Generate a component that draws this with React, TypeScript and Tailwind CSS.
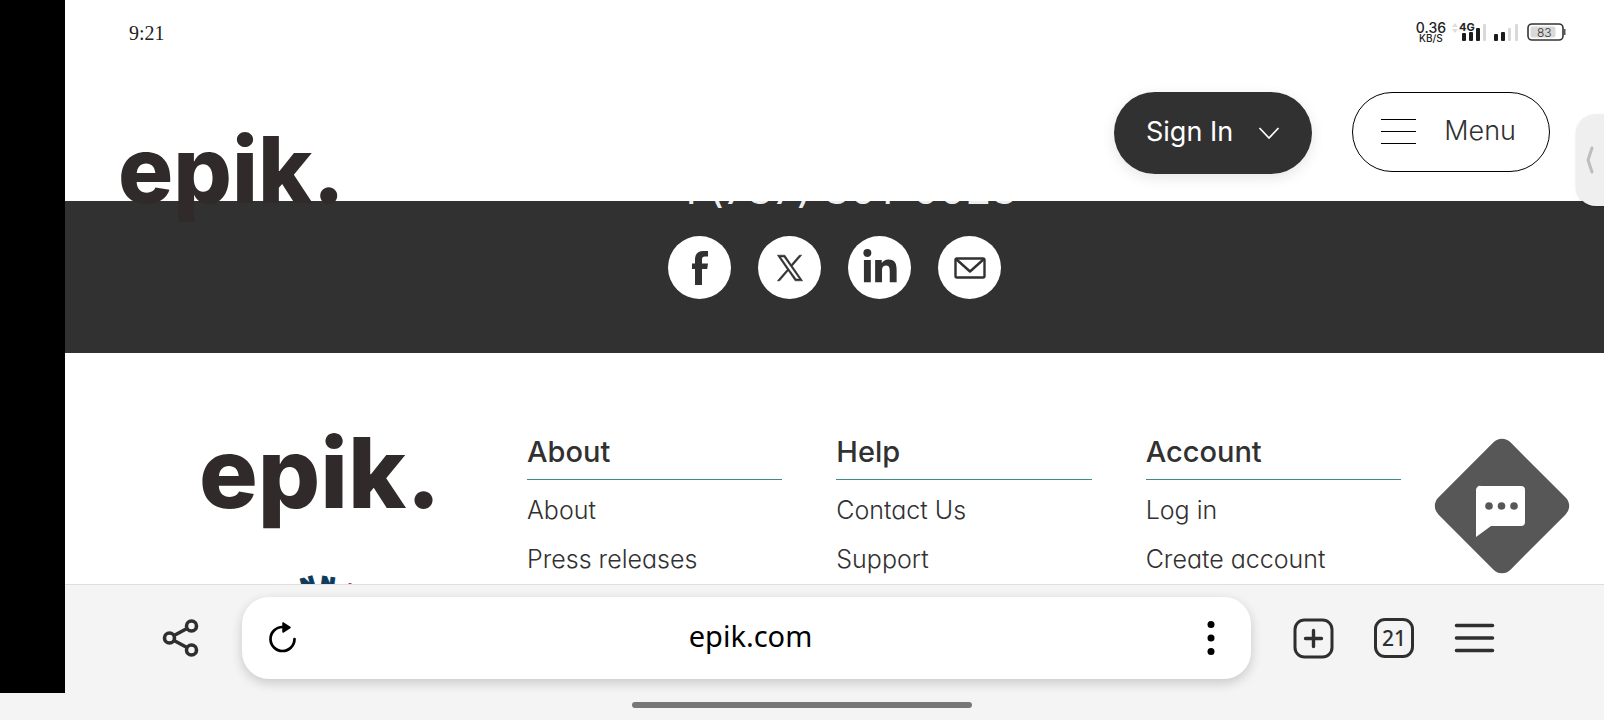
import type { ReactNode } from "react";
import { FaLinkedinIn } from "react-icons/fa";

const columns = [
  { title: "About", links: ["About", "Press releases"] },
  { title: "Help", links: ["Contact Us", "Support"] },
  { title: "Account", links: ["Log in", "Create account"] },
];

function StatusBar() {
  return (
    <div className="flex h-16 items-center justify-between pl-16 pr-[38px]">
      <time className="pt-0.5 font-['Liberation_Serif',serif] text-xl text-[#222]">9:21</time>
      <div className="flex items-center gap-1.5 font-['Inter',sans-serif] text-[#222]">
        <div className="text-center font-medium">
          <div className="text-sm leading-[11px]">0.36</div>
          <div className="text-[10px] leading-[10px]">KB/S</div>
        </div>
        <svg width="67" height="22" viewBox="0 0 67 22" aria-hidden="true">
          <path d="M0 6l3-4 3 4zM0 8l3 4 3-4z" fill="#ddd" />
          <g fill="#1c1c1c">
            <rect x="10" y="12" width="4" height="8" rx="1" />
            <rect x="17" y="11" width="4" height="9" rx="1" />
            <rect x="24" y="7" width="4" height="13" rx="1" />
            <rect x="42" y="13" width="4" height="7" rx="1" />
            <rect x="49" y="11" width="4" height="9" rx="1" />
          </g>
          <g fill="#d9d9d9">
            <rect x="31" y="3" width="3" height="17" rx="1" />
            <rect x="56" y="7" width="3" height="13" rx="1" />
            <rect x="63" y="3" width="3" height="17" rx="1" />
          </g>
          <text x="7" y="10" fontSize="11" fontWeight="700" fill="#222" stroke="#fff" strokeWidth="2" paintOrder="stroke">
            4G
          </text>
        </svg>
        <svg className="ml-0.5" width="39" height="20" viewBox="0 0 39 20" aria-hidden="true">
          <rect x="1" y="2" width="35" height="16" rx="4" fill="#fff" stroke="#333" strokeWidth="1.6" />
          <rect x="3.5" y="4.500" width="25" height="11" rx="2" fill="#d9d9d9" />
          <path d="M37.5 7v6" stroke="#555" strokeWidth="2" />
          <text x="10" y="14.500" fontSize="12" fontWeight="300" fill="#333">
            83
          </text>
        </svg>
      </div>
    </div>
  );
}

function SocialLink({ label, children }: { label: string; children: ReactNode }) {
  return (
    <a
      href="#"
      aria-label={label}
      className="flex size-[63px] items-center justify-center rounded-full bg-white text-[#313131]"
    >
      {children}
    </a>
  );
}

function Toolbar() {
  return (
    <div className="relative z-10 flex h-[109px] shrink-0 items-center border-t border-[#dedede] bg-[#f4f4f4] pb-0.5 pl-24 pr-[109px] text-[#2f2f2f]">
      <button aria-label="Share" className="mr-[41px]">
        <svg width="40" height="40" viewBox="0 0 40 40" fill="none" stroke="currentColor" strokeWidth="3.6">
          <circle cx="8.500" cy="20" r="5" />
          <circle cx="30.500" cy="8" r="5" />
          <circle cx="30.500" cy="32" r="5" />
          <path d="M13 17.500L26 10.500M13 22.500L26 29.500" />
        </svg>
      </button>
      <div className="flex h-[82px] flex-1 items-center rounded-[27px] bg-white pl-6 pr-8 text-black shadow-[0_4px_12px_rgba(0,0,0,0.18)]">
        <button aria-label="Reload">
          <svg width="32" height="32" viewBox="0 0 32 32">
            <path d="M28.500 17a12 12 0 1 1-12-12" fill="none" stroke="#000" strokeWidth="2.700" strokeLinecap="round" />
            <path d="M17 1v9l7-4.500z" stroke="#000" strokeWidth="1.500" strokeLinejoin="round" />
          </svg>
        </button>
        <input
          aria-label="Address"
          defaultValue="epik.com"
          className="min-w-0 flex-1 bg-transparent pb-1 text-center font-['Noto_Sans',sans-serif] text-[29px] outline-none"
        />
        <button aria-label="Page options">
          <svg width="16" height="40" viewBox="0 0 16 40">
            <circle cx="8" cy="6.500" r="3.500" />
            <circle cx="8" cy="20" r="3.500" />
            <circle cx="8" cy="33.500" r="3.500" />
          </svg>
        </button>
      </div>
      <div className="ml-[42px] flex items-center gap-10">
        <button aria-label="New tab">
          <svg width="41" height="41" viewBox="0 0 41 41" fill="none" stroke="currentColor" strokeWidth="3" strokeLinecap="round">
            <rect x="2" y="2" width="37" height="37" rx="9.500" />
            <path d="M20.500 12.500v16M12.500 20.500h16" strokeWidth="3.400" />
          </svg>
        </button>
        <button
          aria-label="21 open tabs"
          className="flex size-10 items-center justify-center rounded-[11px] border-3 border-[#2f2f2f] font-['Noto_Sans',sans-serif] text-[21px] leading-6 font-medium"
        >
          21
        </button>
        <button aria-label="Browser menu">
          <svg width="41" height="32" viewBox="0 0 41 32" stroke="currentColor" strokeWidth="3.600" strokeLinecap="round">
            <path d="M2.500 3.500h36M2.500 16h36M2.500 28.500h36" />
          </svg>
        </button>
      </div>
    </div>
  );
}

export default function App() {
  return (
    <div className="flex h-screen flex-col overflow-hidden bg-[#f4f4f4] font-['Inter',sans-serif] text-[#313131] [font-feature-settings:'cv11']">
      <div className="flex min-h-0 flex-1">
        <div className="w-[65px] shrink-0 bg-black" />
        <div className="relative flex min-w-0 flex-1 flex-col bg-white">
          <header className="relative z-10 h-[201px] shrink-0 bg-white">
            <StatusBar />
            <div className="flex items-start justify-between pl-[53px] pr-[54px] pt-7">
              <a href="#" className="pt-7 text-[92px] leading-[100px] font-extrabold text-[#312a2a]">
                epik.
              </a>
              <div className="flex gap-10 text-[27px]">
                <button className="flex h-[82px] w-[198px] items-center justify-between rounded-full bg-[#313131] pb-0.5 pl-8 pr-8 text-white shadow-[0_4px_14px_rgba(0,0,0,0.1)]">
                  Sign In
                  <svg width="22" height="14" viewBox="0 0 22 14" fill="none" stroke="#fff" strokeWidth="1.700">
                    <path d="M1.500 3L11 13l9.500-10" />
                  </svg>
                </button>
                <button className="flex h-20 w-[198px] items-center justify-between rounded-full border border-black pb-0.5 pl-7 pr-[33px] font-light">
                  <svg width="35" height="28" viewBox="0 0 35 28" stroke="#000" strokeWidth="1">
                    <path d="M0 2.500h35M0 14.500h35M0 26.500h35" />
                  </svg>
                  Menu
                </button>
              </div>
            </div>
          </header>

          <button
            aria-label="Open side panel"
            className="absolute right-0 top-[114px] z-20 flex h-[92px] w-7 items-center justify-center rounded-l-[20px] bg-[#efefef] shadow-sm"
          >
            <svg width="8" height="28" viewBox="0 0 8 28" fill="none" stroke="#bdbdbd" strokeWidth="3" strokeLinecap="round" strokeLinejoin="round">
              <path d="M6 2L2 14l4 12" />
            </svg>
          </button>

          <main className="min-h-0 flex-1">
            <section className="-mt-10 flex flex-col items-center bg-[#313131] pb-[54px]">
              <a href="#" className="text-[42px] leading-[56px] text-[#eee]">
                +1 (737) 301-0023
              </a>
              <div className="mt-[19px] flex gap-[27px]">
                <SocialLink label="Facebook">
                  <svg width="18" height="34" viewBox="0 0 18 34" fill="currentColor">
                    <path d="M4 34V18H1v-5.500h3V8.500C4 3 7 0 12.500 0H17v5.500h-3C11.800 5.500 11 6.500 11 8.500v4h6L16.200 18H11v16z" />
                  </svg>
                </SocialLink>
                <SocialLink label="X">
                  <svg width="28" height="28" viewBox="0 0 24 24" fill="currentColor" stroke="currentColor" strokeWidth="0.500">
                    <path d="M14 10.300L22 1h-2l-6.900 8L7.600 1H1.200l8.400 12.200L1.200 23h2l7.300-8.600 5.900 8.600h6.400zM11.400 13.300l-.9-1.200L3.900 2.500h2.900l5.500 7.800.9 1.200 7 10h-2.900z" />
                  </svg>
                </SocialLink>
                <SocialLink label="LinkedIn">
                  <FaLinkedinIn size={38} />
                </SocialLink>
                <SocialLink label="Email">
                  <svg width="32" height="22" viewBox="0 0 32 22" fill="none" stroke="currentColor" strokeWidth="2.400" strokeLinejoin="round">
                    <rect x="1.500" y="1.500" width="29" height="19" rx="1.500" />
                    <path d="M2 2l14 12.500L30 2" />
                  </svg>
                </SocialLink>
              </div>
            </section>

            <footer className="flex pl-[134px] pt-[60px]">
              <div className="w-[328px] shrink-0">
                <a href="#" className="block text-[98px] leading-[120px] font-extrabold text-[#312a2a]">
                  epik.
                </a>
                <svg className="ml-[86px] mt-10" width="90" height="90" viewBox="0 0 90 90" aria-hidden="true">
                  <g fill="#0d3b5c" stroke="#0d3b5c" fontSize="18" fontWeight="900">
                    <text x="18" y="19" transform="rotate(-16 18 19)">N</text>
                    <text x="35" y="16" transform="rotate(8 35 16)">N</text>
                  </g>
                  <circle cx="65" cy="12" r="2" fill="#8a2432" />
                </svg>
              </div>
              <div className="mr-[203px] grid flex-1 grid-cols-3 gap-[54px] pt-5">
                {columns.map((column) => (
                  <nav key={column.title} aria-label={column.title}>
                    <h2 className="border-b border-[#3d8b8b] pb-2 text-[29px] leading-[38px] font-medium">
                      {column.title}
                    </h2>
                    <ul className="pt-1.5 text-[25px] leading-[49px] font-light">
                      {column.links.map((link) => (
                        <li key={link}>
                          <a href="#">{link}</a>
                        </li>
                      ))}
                    </ul>
                  </nav>
                ))}
              </div>
            </footer>
          </main>

          <button aria-label="Open chat" className="absolute bottom-[119px] right-[34px] z-10">
            <svg width="136" height="136" viewBox="0 0 136 136">
              <rect x="17" y="17" width="102" height="102" rx="12" transform="rotate(45 68 68)" fill="#575757" />
              <path d="M47 48h40a4 4 0 0 1 4 4v32a4 4 0 0 1-4 4H57L42 99V52a4 4 0 0 1 5-4z" fill="#fff" />
              <g fill="#575757">
                <circle cx="55" cy="68" r="3.800" />
                <circle cx="67.500" cy="68" r="3.800" />
                <circle cx="80" cy="68" r="3.800" />
              </g>
            </svg>
          </button>

          <Toolbar />
        </div>
      </div>
      <div className="flex h-[27px] shrink-0 justify-center pt-[9px]">
        <div className="h-1.5 w-[340px] rounded-full bg-[#777]" />
      </div>
    </div>
  );
}
